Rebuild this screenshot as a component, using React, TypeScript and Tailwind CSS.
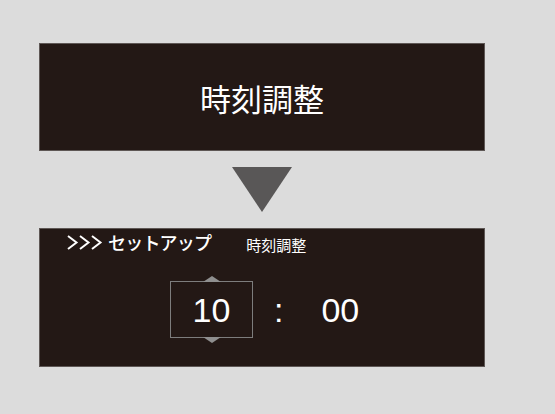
export default function App() {
  const jp = { fontFamily: '"Noto Sans CJK JP", "Noto Sans", sans-serif' };
  const num = { fontFamily: '"Liberation Sans", Arial, sans-serif' };

  return (
    <div className="w-[555px] h-[414px] bg-[#dcdcdc] pt-[43px] overflow-hidden">
      <div className="ml-[39px] w-[446px]">
        {/* Title panel */}
        <div className="h-[108px] bg-[#231815] border border-[#5e5755] flex items-center justify-center">
          <span className="text-[31px] leading-none text-white" style={jp}>
            時刻調整
          </span>
        </div>

        {/* Arrow */}
        <div className="flex justify-center pt-[16px] pb-[16px]">
          <svg width="60" height="45" viewBox="0 0 60 45">
            <polygon points="0,0 60,0 30,45" fill="#595757" />
          </svg>
        </div>

        {/* Setup panel */}
        <div className="h-[139px] bg-[#231815] border border-[#5e5755]">
          <div className="flex items-center h-[24px] pl-[27px] pt-[2px]">
            <svg width="38" height="15" viewBox="0 0 38 15" className="mt-[1px]">
              <polyline points="1,1 9.5,7.5 1,14" fill="none" stroke="#fff" strokeWidth="2" />
              <polyline points="13,1 21.5,7.5 13,14" fill="none" stroke="#fff" strokeWidth="2" />
              <polyline points="25,1 33.5,7.5 25,14" fill="none" stroke="#fff" strokeWidth="2" />
            </svg>
            <span className="ml-[3px] text-[18px] font-medium leading-none text-white tracking-[-0.8px]" style={jp}>
              セットアップ
            </span>
            <span className="ml-[35px] mt-[4px] text-[15px] leading-none text-white" style={jp}>
              時刻調整
            </span>
          </div>

          <div className="flex items-center mt-[28px] ml-[130px]">
            <div className="relative w-[83px] h-[57px] border border-[#7d7d7d] flex items-center justify-center">
              <svg width="18" height="6" viewBox="0 0 18 6" className="absolute left-[32px] top-[-6px]">
                <polygon points="0,6 9,0 18,6" fill="#8f8f8f" />
              </svg>
              <span className="text-[34px] leading-none text-white" style={num}>
                10
              </span>
              <svg width="18" height="6" viewBox="0 0 18 6" className="absolute left-[32px] bottom-[-6px]">
                <polygon points="0,0 18,0 9,6" fill="#8f8f8f" />
              </svg>
            </div>
            <span className="ml-[21px] text-[34px] leading-none text-white" style={num}>
              :
            </span>
            <span className="ml-[38px] text-[34px] leading-none text-white" style={num}>
              00
            </span>
          </div>
        </div>
      </div>
    </div>
  );
}
